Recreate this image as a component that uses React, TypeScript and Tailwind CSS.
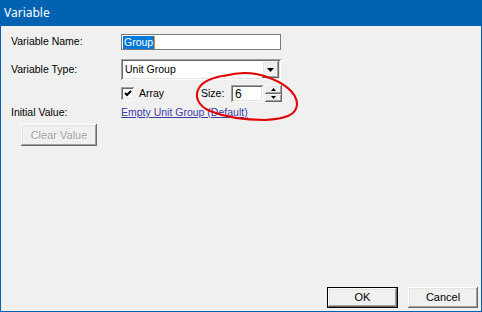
import React from 'react'

const raised =
  'shadow-[inset_-1px_-1px_0_#696969,inset_1px_1px_0_#ffffff,inset_-2px_-2px_0_#a0a0a0,inset_2px_2px_0_#e3e3e3]'
const sunken =
  'shadow-[inset_1px_1px_0_#a0a0a0,inset_-1px_-1px_0_#ffffff,inset_2px_2px_0_#696969,inset_-2px_-2px_0_#e3e3e3]'

function SpinArrow({ up }: { up?: boolean }) {
  return (
    <svg width="5" height="3" viewBox="0 0 5 3">
      <path d={up ? 'M2.5 0 L5 3 L0 3 Z' : 'M0 0 L5 0 L2.5 3 Z'} fill="#000" />
    </svg>
  )
}

export default function App() {
  return (
    <div
      className="relative w-[482px] h-[312px] flex flex-col bg-[#0063b1] overflow-hidden text-black"
      style={{ fontFamily: '"Liberation Sans", Arial, sans-serif' }}
    >
      {/* Title bar */}
      <div className="h-[26px] flex items-center px-[4px] text-white text-[12px] shrink-0" style={{ fontFamily: '"Noto Sans", "Open Sans", sans-serif' }}>
        Variable
      </div>

      {/* Client area */}
      <div className="flex-1 mx-[1px] mb-[1px] bg-[#f0f0f0] flex flex-col pl-[10px] pt-[8px] text-[10.5px]">
        {/* Variable Name */}
        <div className="flex items-center h-[16px]">
          <span className="w-[110px]">Variable Name:</span>
          <div className="w-[160px] h-[16px] border border-[#7a7a7a] bg-white flex items-center pl-[1px]">
            <span className="bg-[#0078d7] text-white h-[13px] leading-[13px] px-[1px]">Group</span>
            <span className="w-[1px] h-[13px] bg-[#ff8728]" />
          </div>
        </div>

        {/* Variable Type */}
        <div className="flex items-center h-[21px] mt-[9px]">
          <span className="w-[110px]">Variable Type:</span>
          <div className={`w-[160px] h-[21px] bg-white flex items-center ${sunken}`}>
            <span className="flex-1 pl-[4px]">Unit Group</span>
            <div className={`w-[17px] h-[17px] mr-[2px] bg-[#f0f0f0] flex items-center justify-center ${raised}`}>
              <svg width="7" height="4" viewBox="0 0 7 4">
                <path d="M0 0 L7 0 L3.5 4 Z" fill="#000" />
              </svg>
            </div>
          </div>
        </div>

        {/* Array / Size */}
        <div className="flex items-center h-[17px] mt-[5px]">
          <span className="w-[110px]" />
          <div className={`w-[13px] h-[13px] bg-white flex items-center justify-center ${sunken}`}>
            <svg width="8" height="7" viewBox="0 0 8 7">
              <path d="M1 3 L3 5 L7 1" fill="none" stroke="#000" strokeWidth="2" />
            </svg>
          </div>
          <span className="ml-[5px] w-[62px]">Array</span>
          <span className="w-[30px]">Size:</span>
          <div className={`w-[32px] h-[17px] bg-white flex items-center pl-[4px] text-[12px] ${sunken}`}>6</div>
          <div className="ml-[2px] w-[17px] h-[17px] flex flex-col">
            <div className={`flex-1 bg-[#f0f0f0] flex items-center justify-center ${raised}`}>
              <SpinArrow up />
            </div>
            <div className={`flex-1 bg-[#f0f0f0] flex items-center justify-center ${raised}`}>
              <SpinArrow />
            </div>
          </div>
        </div>

        {/* Initial Value */}
        <div className="flex items-center h-[14px] mt-[4px]">
          <span className="w-[110px]">Initial Value:</span>
          <span className="text-[#3c3ca5] underline">Empty Unit Group (Default)</span>
        </div>

        {/* Clear Value */}
        <div className="mt-[4px] ml-[10px]">
          <div
            className={`w-[76px] h-[22px] bg-[#f0f0f0] flex items-center justify-center text-[#a0a0a0] text-[11px] ${raised}`}
            style={{ textShadow: '1px 1px 0 #ffffff' }}
          >
            Clear Value
          </div>
        </div>

        <div className="flex-1" />

        {/* Bottom buttons */}
        <div className="flex justify-end gap-[10px] pr-[3px] pb-[3px] text-[11px]">
          <div className="w-[71px] h-[21px] border border-black bg-[#f0f0f0] flex">
            <div className={`flex-1 flex items-center justify-center ${raised}`}>OK</div>
          </div>
          <div className={`w-[70px] h-[21px] bg-[#f0f0f0] flex items-center justify-center ${raised}`}>Cancel</div>
        </div>
      </div>

      {/* Red hand-drawn annotation */}
      <svg className="absolute left-0 top-0 pointer-events-none" width="482" height="312" viewBox="0 0 482 312">
        <path
          d="M224 76 C238 72 254 72 267 77 C282 82 297 92 297 104 C297 115 285 119 265 120 C245 120 225 117 210 111 C198 106 194 96 199 88 C203 81 213 77 228 75"
          fill="none"
          stroke="#e10000"
          strokeWidth="2"
          strokeLinecap="round"
        />
      </svg>
    </div>
  )
}
